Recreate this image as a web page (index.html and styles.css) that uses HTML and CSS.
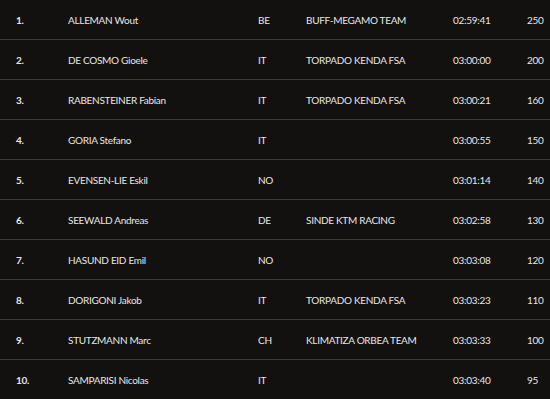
FILE: index.html
```html
<!DOCTYPE html>
<html>
<head>
<meta charset="utf-8">
<link rel="stylesheet" href="styles.css">
</head>
<body>
<div class="table">
  <div class="row"><span class="rank">1.</span><span class="name">ALLEMAN Wout</span><span class="nat">BE</span><span class="team">BUFF-MEGAMO TEAM</span><span class="time">02:59:41</span><span class="pts">250</span></div>
  <div class="row"><span class="rank">2.</span><span class="name">DE COSMO Gioele</span><span class="nat">IT</span><span class="team">TORPADO KENDA FSA</span><span class="time">03:00:00</span><span class="pts">200</span></div>
  <div class="row"><span class="rank">3.</span><span class="name">RABENSTEINER Fabian</span><span class="nat">IT</span><span class="team">TORPADO KENDA FSA</span><span class="time">03:00:21</span><span class="pts">160</span></div>
  <div class="row"><span class="rank">4.</span><span class="name">GORIA Stefano</span><span class="nat">IT</span><span class="team"></span><span class="time">03:00:55</span><span class="pts">150</span></div>
  <div class="row"><span class="rank">5.</span><span class="name">EVENSEN-LIE Eskil</span><span class="nat">NO</span><span class="team"></span><span class="time">03:01:14</span><span class="pts">140</span></div>
  <div class="row"><span class="rank">6.</span><span class="name">SEEWALD Andreas</span><span class="nat">DE</span><span class="team">SINDE KTM RACING</span><span class="time">03:02:58</span><span class="pts">130</span></div>
  <div class="row"><span class="rank">7.</span><span class="name">HASUND EID Emil</span><span class="nat">NO</span><span class="team"></span><span class="time">03:03:08</span><span class="pts">120</span></div>
  <div class="row"><span class="rank">8.</span><span class="name">DORIGONI Jakob</span><span class="nat">IT</span><span class="team">TORPADO KENDA FSA</span><span class="time">03:03:23</span><span class="pts">110</span></div>
  <div class="row"><span class="rank">9.</span><span class="name">STUTZMANN Marc</span><span class="nat">CH</span><span class="team">KLIMATIZA ORBEA TEAM</span><span class="time">03:03:33</span><span class="pts">100</span></div>
  <div class="row"><span class="rank">10.</span><span class="name">SAMPARISI Nicolas</span><span class="nat">IT</span><span class="team"></span><span class="time">03:03:40</span><span class="pts">95</span></div>
</div>
</body>
</html>
```

FILE: styles.css
```css
html, body {
  margin: 0;
  padding: 0;
  background: #131110;
}
body {
  width: 550px;
  height: 399px;
  overflow: hidden;
  font-family: Lato, "Open Sans", sans-serif;
  font-size: 10px;
  letter-spacing: -0.3px;
  color: #e6e6e6;
}
.table {
  display: flex;
  flex-direction: column;
}
.row {
  display: grid;
  grid-template-columns: 52px 190px 48px 147px 74px 1fr;
  align-items: center;
  height: 39px;
  padding-left: 16px;
  border-bottom: 1px solid #3c3a39;
}
.rank {
  font-weight: 700;
}
```
